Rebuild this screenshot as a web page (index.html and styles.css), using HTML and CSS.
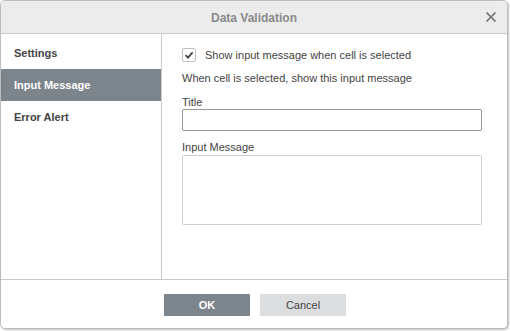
FILE: index.html
```html
<!DOCTYPE html>
<html>
  <head>
    <title>Data Validation</title>
    <link rel="stylesheet" href="styles.css">
  </head>
  <body>
    <div class="dialog">
      <header class="dialog-header">
        <span class="dialog-title">Data Validation</span>
        <button class="close-button" aria-label="Close">
          <svg viewBox="0 0 10 10" width="10" height="10">
            <path d="M0.5 0.5 L9.5 9.5 M9.5 0.5 L0.5 9.5" stroke="#777" stroke-width="1.6" fill="none" />
          </svg>
        </button>
      </header>

      <div class="dialog-body">
        <nav class="side-menu">
          <div class="menu-item">Settings</div>
          <div class="menu-item active">Input Message</div>
          <div class="menu-item">Error Alert</div>
        </nav>

        <div class="content">
          <label class="check-row">
            <span class="checkbox">
              <svg viewBox="0 0 12 12" width="12" height="12">
                <path d="M2.5 6.2 L5 8.6 L9.6 3.4" stroke="#444" stroke-width="1.8" fill="none" />
              </svg>
            </span>
            <span>Show input message when cell is selected</span>
          </label>

          <div class="hint">When cell is selected, show this input message</div>

          <div class="field">
            <label class="field-label" for="titleInput">Title</label>
            <input type="text" id="titleInput" class="text-input" />
          </div>

          <div class="field">
            <label class="field-label" for="messageInput">Input Message</label>
            <textarea id="messageInput" class="text-area"></textarea>
          </div>
        </div>
      </div>

      <footer class="dialog-footer">
        <button class="btn btn-primary">OK</button>
        <button class="btn btn-secondary">Cancel</button>
      </footer>
    </div>
  </body>
</html>
```

FILE: styles.css
```css
* {
  margin: 0;
  padding: 0;
  box-sizing: border-box;
  font-family: "Liberation Sans", Arial, sans-serif;
}

body {
  width: 510px;
  height: 331px;
  background: #ffffff;
}

.dialog {
  width: 508px;
  height: 329px;
  border: 1px solid #bdbdbd;
  border-radius: 5px;
  box-shadow: 1px 1px 2px rgba(0, 0, 0, 0.25);
  background: #ffffff;
  display: flex;
  flex-direction: column;
  overflow: hidden;
}

.dialog-header {
  height: 33px;
  flex-shrink: 0;
  background: #ececec;
  border-bottom: 1px solid #cbcbcb;
  display: flex;
  align-items: center;
  justify-content: center;
  position: relative;
}

.dialog-title {
  font-size: 12px;
  font-weight: bold;
  color: #8a8a8a;
  margin-top: 1px;
}

.close-button {
  position: absolute;
  right: 11px;
  top: 11px;
  width: 10px;
  height: 10px;
  border: none;
  background: transparent;
  display: flex;
}

.dialog-body {
  flex: 1;
  display: flex;
  min-height: 0;
}

.side-menu {
  width: 161px;
  flex-shrink: 0;
  border-right: 1px solid #cbcbcb;
  padding-top: 3px;
}

.menu-item {
  height: 32px;
  line-height: 32px;
  padding-left: 13px;
  font-size: 11px;
  font-weight: bold;
  color: #444444;
}

.menu-item.active {
  background: #7d858c;
  color: #ffffff;
}

.content {
  flex: 1;
  padding: 14px 0 0 20px;
  font-size: 11px;
  color: #444444;
}

.check-row {
  display: flex;
  align-items: center;
  height: 14px;
  gap: 9px;
}

.checkbox {
  width: 14px;
  height: 14px;
  border: 1px solid #c0c0c0;
  border-radius: 2px;
  display: flex;
  align-items: center;
  justify-content: center;
}

.hint {
  margin-top: 9px;
  line-height: 14px;
}

.field {
  margin-top: 10px;
  width: 300px;
}

.field + .field {
  margin-top: 9px;
}

.field-label {
  display: block;
  line-height: 14px;
}

.text-input {
  display: block;
  width: 100%;
  height: 22px;
  border: 1px solid #9a9a9a;
  border-radius: 2px;
  font-size: 11px;
  padding: 0 4px;
}

.text-area {
  display: block;
  width: 100%;
  height: 70px;
  margin-top: 1px;
  border: 1px solid #cfcfcf;
  border-radius: 2px;
  resize: none;
  font-size: 11px;
}

.dialog-footer {
  height: 49px;
  flex-shrink: 0;
  border-top: 1px solid #cbcbcb;
  display: flex;
  justify-content: center;
  align-items: flex-start;
  padding: 14px 0 0 2px;
  gap: 10px;
}

.btn {
  width: 86px;
  height: 22px;
  border: none;
  border-radius: 1px;
  font-size: 11px;
}

.btn-primary {
  background: #7d858c;
  color: #ffffff;
  font-weight: bold;
}

.btn-secondary {
  background: #dcdddf;
  color: #444444;
}
```
